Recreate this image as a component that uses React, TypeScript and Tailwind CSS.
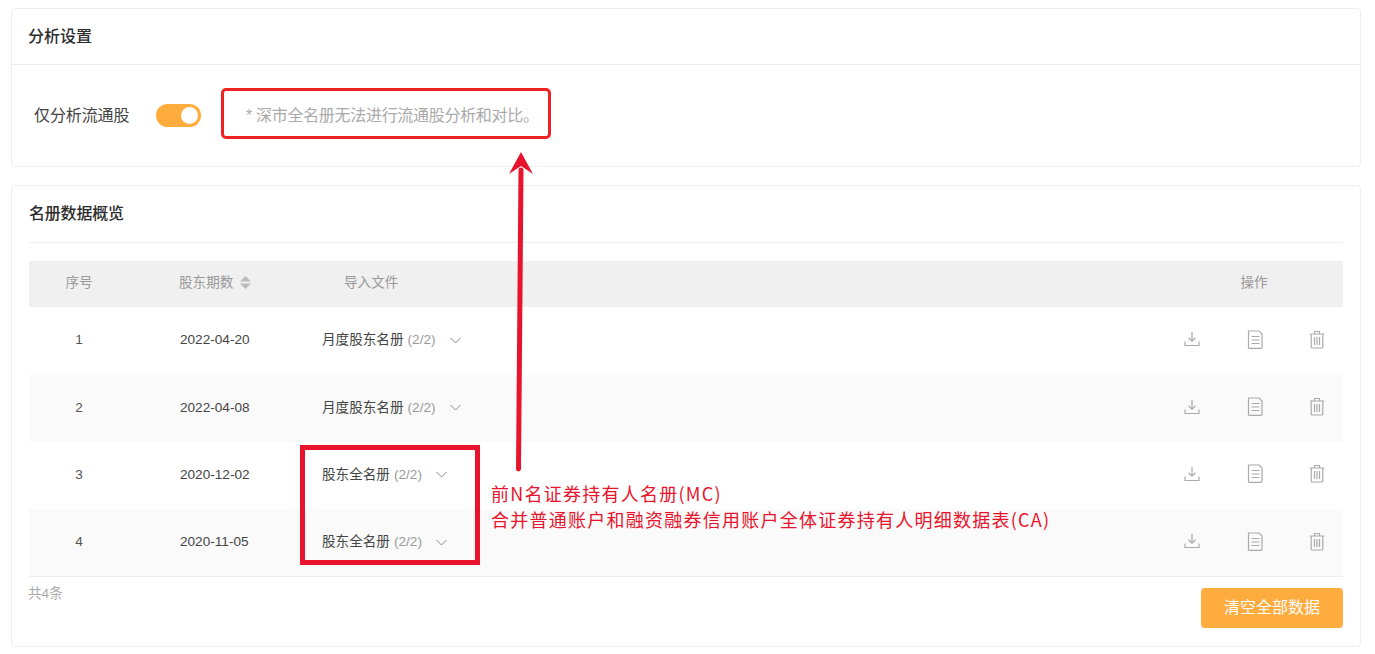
const rows = [
  { no: 1, date: "2022-04-20", file: "月度股东名册", box: "h-[68px] pb-[1px] bg-white" },
  { no: 2, date: "2022-04-08", file: "月度股东名册", box: "h-[67px] pb-[1px] bg-[#fafafa]" },
  { no: 3, date: "2020-12-02", file: "股东全名册", box: "h-[67px] pb-[1px] bg-white" },
  { no: 4, date: "2020-11-05", file: "股东全名册", box: "h-[67px] bg-[#fafafa]" },
];

const DownloadIcon = () => (
  <svg width="16" height="16" viewBox="0 0 16 16" fill="none" stroke="#aaaaaa" strokeWidth="1.2">
    <path d="M8 1v9M4.5 6.8 8 10.2l3.5-3.4" />
    <path d="M1 10.5v4h14v-4" />
  </svg>
);

const DocIcon = () => (
  <svg width="16" height="19" viewBox="0 0 16 19" fill="none" stroke="#aaaaaa" strokeWidth="1.2">
    <path d="M1.500 1h10.500l3 3v13.500a.8.8 0 0 1-.8.8H2.300a.8.8 0 0 1-.8-.8z" />
    <path d="M4.500 6.500h8M4.500 10h8M4.500 13.500h8" />
  </svg>
);

const TrashIcon = () => (
  <svg width="16" height="19" viewBox="0 0 16 19" fill="none" stroke="#aaaaaa" strokeWidth="1.2">
    <path d="M.8 4h14.400M5.500 4V1.500h5V4" />
    <path d="M2.200 4v13a1 1 0 0 0 1 1h9.600a1 1 0 0 0 1-1V4" />
    <path d="M5.500 7v8M8 7v8M10.500 7v8" />
  </svg>
);

const Chevron = () => (
  <svg className="ml-[14px]" width="11" height="7" viewBox="0 0 11 7" fill="none" stroke="#888" strokeWidth="1">
    <path d="M.5 1 5.500 6l5-5" />
  </svg>
);

export default function App() {
  return (
    <div className="relative h-[654px] w-[1375px] overflow-hidden bg-white pt-2 pl-[11px] font-['Liberation_Sans','Noto_Sans_CJK_SC',sans-serif] text-[13.6px] text-[#333]">
      {/* 分析设置 */}
      <div className="h-[159px] w-[1350px] rounded border border-[#eeeeee]">
        <div className="flex h-[56px] items-center border-b border-[#eeeeee] pl-[16px] text-base font-medium text-[#2c2c2c]">
          分析设置
        </div>
        <div className="flex h-[101px] items-center pl-[22px]">
          <span className="w-[122px] text-base tracking-[-0.1px] text-[#444]">仅分析流通股</span>
          <div className="flex h-[23px] w-[45px] items-center justify-end rounded-full bg-[#ffac3f] pr-[3px]">
            <div className="h-[17px] w-[17px] rounded-full bg-white" />
          </div>
          <span className="ml-[45px] text-base tracking-[-0.3px] text-[#aaa]">* 深市全名册无法进行流通股分析和对比。</span>
        </div>
      </div>

      {/* 名册数据概览 */}
      <div className="mt-[18px] flex h-[462px] w-[1350px] flex-col rounded border border-[#eeeeee] px-[17px]">
        <div className="flex h-[57px] shrink-0 items-center border-b border-[#eeeeee] text-base font-medium tracking-[-0.2px] text-[#2c2c2c]">
          名册数据概览
        </div>

        <div className="mt-[18px] flex h-[46px] shrink-0 items-center bg-[#f0f0f0] pb-[2px] text-[#999]">
          <div className="w-[100px] text-center">序号</div>
          <div className="flex w-[215px] items-center gap-[7px] pl-[50px]">
            股东期数
            <svg width="11" height="13" viewBox="0 0 11 13" fill="#bbb">
              <path d="M5.500 0 11 5.500H0zM0 7.500h11L5.500 13z" />
            </svg>
          </div>
          <div className="flex-1">导入文件</div>
          <div className="mr-[75px] w-[28px] text-center">操作</div>
        </div>

        {rows.map((row) => (
          <div key={row.no} className={`flex shrink-0 items-center ${row.box}`}>
            <div className="w-[100px] text-center text-[#555]">{row.no}</div>
            <div className="w-[193px] pl-[51px] text-[#444]">{row.date}</div>
            <div className="flex flex-1 items-center text-[#444]">
              {row.file}
              <span className="ml-1 text-[#999]">(2/2)</span>
              <Chevron />
            </div>
            <div className="flex items-center gap-[46px] pr-[18px] pb-[3px]">
              <DownloadIcon />
              <div className="ml-[1px]">
                <DocIcon />
              </div>
              <TrashIcon />
            </div>
          </div>
        ))}

        <div className="flex flex-1 items-start justify-between border-t border-[#eeeeee]">
          <span className="mt-[7px] -ml-px text-[#aaa]">共4条</span>
          <button className="mt-[11px] h-[40px] w-[142px] rounded bg-[#ffac3f] text-base text-white">清空全部数据</button>
        </div>
      </div>

      {/* annotations */}
      <div className="absolute top-[88px] left-[221px] h-[51px] w-[330px] rounded-[5px] border-[3px] border-[#ee2222]" />
      <div className="absolute top-[445px] left-[300px] h-[120px] w-[180px] border-[5px] border-[#e8132c]" />
      <svg className="absolute top-[150px] left-[505px]" width="32" height="325" viewBox="0 0 32 325" fill="none">
        <path d="M13.500 319 16 20" stroke="#e8132c" strokeWidth="5" strokeLinecap="round" />
        <path d="M16 2 28 24 16 16 4 24z" fill="#e8132c" />
      </svg>
      <div className="absolute top-[480px] left-[491px] text-lg leading-[26px] tracking-[1.25px] whitespace-nowrap text-[#e8132c] font-['Noto_Sans_CJK_SC',sans-serif]">
        <div>前N名证券持有人名册(MC)</div>
        <div>合并普通账户和融资融券信用账户全体证券持有人明细数据表(CA)</div>
      </div>
    </div>
  );
}
